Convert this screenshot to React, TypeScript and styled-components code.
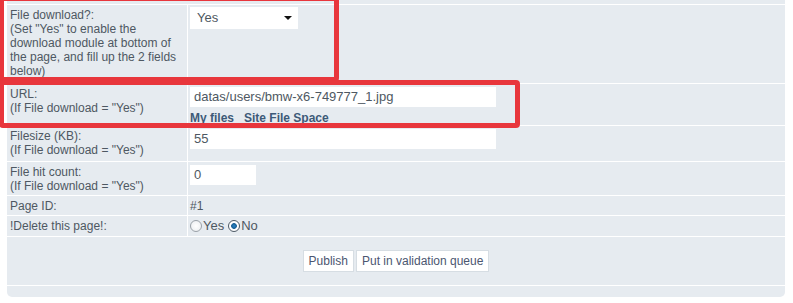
import styled, { createGlobalStyle } from 'styled-components';

const Global = createGlobalStyle`
  body {
    margin: 0;
    background: #ffffff;
    font-family: "Liberation Sans", Arial, sans-serif;
  }
`;

const Page = styled.div`
  position: relative;
  width: 793px;
  height: 303px;
  overflow: hidden;
  padding: 0 8px 0 7px;
  box-sizing: border-box;
`;

// form table
const Form = styled.div`
  background: #e6ebf0;
  border-radius: 0 0 5px 5px;
  color: #4e5862;
  font-size: 12px;
  line-height: 14px;
`;

const Row = styled.div<{ $h: number }>`
  display: grid;
  grid-template-columns: 181px 1fr;
  height: ${({ $h }) => $h}px;
  border-bottom: 1px solid #ffffff;
`;

const Label = styled.div`
  padding: 3px 3px 0 3px;
  border-right: 1px solid #ffffff;
`;

const Value = styled.div`
  padding: 3px 2px 0 2px;
`;

const Stub = styled.div`
  height: 4px;
  border-bottom: 1px solid #ffffff;
`;

const Footer = styled.div`
  height: 48px;
  border-bottom: 1px solid #ffffff;
  display: flex;
  align-items: center;
  justify-content: center;
  gap: 2px;
`;

const Bottom = styled.div`
  height: 11px;
`;

// controls
const Select = styled.div`
  position: relative;
  width: 108px;
  height: 22px;
  margin-top: -1px;
  background: #ffffff;
  box-sizing: border-box;
  padding: 4px 0 0 7px;
  color: #4e5862;
  font-size: 13px;
`;

const Arrow = styled.span`
  position: absolute;
  right: 6px;
  top: 9px;
  width: 0;
  height: 0;
  border-left: 4px solid transparent;
  border-right: 4px solid transparent;
  border-top: 4px solid #111111;
`;

const TextBox = styled.div<{ $w: number }>`
  width: ${({ $w }) => $w}px;
  height: 20px;
  background: #ffffff;
  box-sizing: border-box;
  padding: 2px 4px 0 4px;
  font-size: 13px;
  line-height: 16px;
  color: #4e5862;
`;

const Links = styled.div`
  margin-top: 4px;
  display: flex;
  gap: 10px;
  font-weight: bold;
  color: #3d5a78;
`;

const Radios = styled.div`
  display: flex;
  align-items: center;
  font-size: 13px;
`;

const Radio = styled.span<{ $checked?: boolean }>`
  display: inline-block;
  box-sizing: border-box;
  width: 12px;
  height: 12px;
  margin-right: 1px;
  border-radius: 50%;
  border: 1px solid ${({ $checked }) => ($checked ? '#4d5a66' : '#9aa1a8')};
  background: ${({ $checked }) =>
    $checked
      ? 'radial-gradient(circle, #2a86c8 0, #1a5f95 2.5px, #ffffff 3.2px, #ffffff 100%)'
      : 'radial-gradient(circle, #ffffff 0, #e9ecef 100%)'};
`;

const RadioText = styled.span`
  margin-right: 4px;
`;

const Button = styled.div`
  height: 22px;
  box-sizing: border-box;
  padding: 3px 5px 0 5px;
  background: #ffffff;
  border: 1px solid #d6dde3;
  color: #4b5670;
  font-size: 12px;
  line-height: 15px;
`;

// red annotations
const Mark = styled.div<{ $l: number; $t: number; $w: number; $h: number }>`
  position: absolute;
  left: ${({ $l }) => $l}px;
  top: ${({ $t }) => $t}px;
  width: ${({ $w }) => $w}px;
  height: ${({ $h }) => $h}px;
  box-sizing: border-box;
  border: 5px solid #e8363c;
  border-radius: 4px;
  pointer-events: none;
`;

export default function App() {
  return (
    <>
      <Global />
      <Page>
        <Form>
          <Stub />
          <Row $h={78}>
            <Label>
              File download?:
              <br />
              (Set "Yes" to enable the download module at bottom of the page, and fill up the 2 fields below)
            </Label>
            <Value>
              <Select>
                Yes
                <Arrow />
              </Select>
            </Value>
          </Row>
          <Row $h={41}>
            <Label>
              URL:
              <br />
              (If File download = "Yes")
            </Label>
            <Value>
              <TextBox $w={306}>datas/users/bmw-x6-749777_1.jpg</TextBox>
              <Links>
                <span>My files</span>
                <span>Site File Space</span>
              </Links>
            </Value>
          </Row>
          <Row $h={35}>
            <Label>
              Filesize (KB):
              <br />
              (If File download = "Yes")
            </Label>
            <Value>
              <TextBox $w={306}>55</TextBox>
            </Value>
          </Row>
          <Row $h={33}>
            <Label>
              File hit count:
              <br />
              (If File download = "Yes")
            </Label>
            <Value>
              <TextBox $w={66}>0</TextBox>
            </Value>
          </Row>
          <Row $h={19}>
            <Label>Page ID:</Label>
            <Value>#1</Value>
          </Row>
          <Row $h={20}>
            <Label>!Delete this page!:</Label>
            <Value>
              <Radios>
                <Radio />
                <RadioText>Yes</RadioText>
                <Radio $checked />
                <RadioText>No</RadioText>
              </Radios>
            </Value>
          </Row>
          <Footer>
            <Button>Publish</Button>
            <Button>Put in validation queue</Button>
          </Footer>
          <Bottom />
        </Form>
        <Mark $l={-1} $t={-4} $w={340} $h={86} />
        <Mark $l={-1} $t={80} $w={521} $h={48} />
      </Page>
    </>
  );
}
